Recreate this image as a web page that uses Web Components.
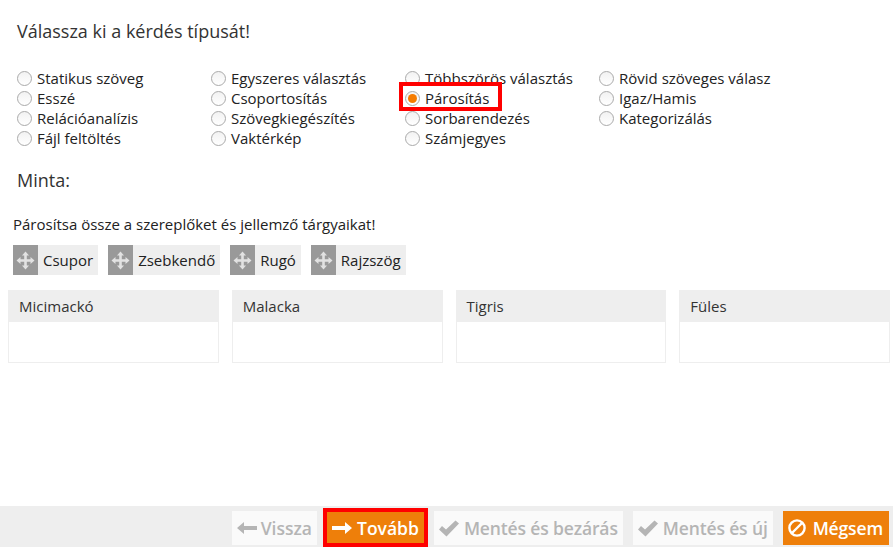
<!DOCTYPE html>
<html lang="hu"><head><meta charset="utf-8"><title>Kérdés típusa</title>
<style>
html,body{margin:0;height:100%;}
body{font-family:"Open Sans",sans-serif;color:#222;background:#fff;}
</style></head><body>
<type-page></type-page>
<script>
function el(name, css, html){
  customElements.define(name, class extends HTMLElement{
    connectedCallback(){
      if(this.shadowRoot) return;
      const r=this.attachShadow({mode:'open'});
      r.innerHTML='<style>'+css+'</style>'+(typeof html==='function'?html(this):html);
    }
  });
}
el('radio-opt',`
:host{display:flex;align-items:center;height:20px;font-size:15px;line-height:20px;color:#222;position:relative;}
.r{box-sizing:border-box;width:15px;height:15px;border-radius:50%;border:1px solid #aaa;background:linear-gradient(#f2f2f2,#fff);margin-right:5px;flex:none;display:flex;align-items:center;justify-content:center;}
.r i{display:block;width:9px;height:9px;border-radius:50%;background:#f57c00;}
.t{white-space:nowrap;}
.mark{position:absolute;box-sizing:border-box;left:-6px;top:-6px;width:103px;height:29px;border:4px solid #f00;pointer-events:none;}
`,h=>`<span class="r">${h.hasAttribute('checked')?'<i></i>':''}</span><span class="t"><slot></slot></span>${h.hasAttribute('marked')?'<span class="mark"></span>':''}`);

el('drag-chip',`
:host{display:flex;align-items:center;height:30px;background:#eee;font-size:15px;color:#222;white-space:nowrap;}
.i{width:25px;height:30px;background:#999;display:flex;align-items:center;justify-content:center;flex:none;margin-right:5px;}
.t{padding-right:5px;}
`,`<span class="i"><svg width="19" height="19" viewBox="0 0 19 19" fill="#e2e2e2"><path d="M9.5 .5 13 4.5H10.8V8.2H14.5V6L18.5 9.5 14.5 13V10.8H10.8V14.5H13L9.5 18.5 6 14.5H8.2V10.8H4.5V13L.5 9.5 4.5 6V8.2H8.2V4.5H6Z"/></svg></span><span class="t"><slot></slot></span>`);

el('drop-card',`
:host{display:block;box-sizing:border-box;flex:1 1 0;height:73px;border:1px solid #eee;background:#fff;}
.h{height:31px;margin:0;background:#eee;font-size:15px;line-height:31px;color:#333;padding-left:10px;}
`,`<div class="h"><slot></slot></div>`);

el('bar-btn',`
:host{display:flex;align-items:center;height:34px;box-sizing:border-box;padding:0 5px;background:#fafafa;color:#b5b5b5;font-size:17.5px;font-weight:600;white-space:nowrap;position:relative;}
:host([active]){background:#ee7f0a;color:#fff;}
:host([tight]){letter-spacing:-.14px;}
svg{flex:none;fill:currentColor;margin-right:5px;}
:host([icon=left]) svg{margin-right:4px;}
:host([icon=ban]) svg{margin-right:7px;}
:host([icon=ban]){padding-right:6px;}
.mark{position:absolute;box-sizing:border-box;left:-4px;top:-3px;right:-4px;bottom:-2px;border:4px solid #f00;pointer-events:none;}
`,h=>{
 const ic={
  left:'<svg width="20" height="12" viewBox="0 0 20 12"><path d="M0 6 7 0V4H20V8H7V12Z"/></svg>',
  right:'<svg width="20" height="12" viewBox="0 0 20 12"><path d="M20 6 13 0V4H0V8H13V12Z"/></svg>',
  check:'<svg width="20" height="17" viewBox="0 0 20 16"><path d="M0 9 3 5.5 7 9 16.5 0 20 3 7.5 16Z"/></svg>',
  ban:'<svg width="18" height="18" viewBox="0 0 18 18"><circle cx="9" cy="9" r="7.6" fill="none" stroke="currentColor" stroke-width="2.4"/><path d="M4 14 14 4" stroke="currentColor" stroke-width="2.4"/></svg>'
 };
 return ic[h.getAttribute('icon')]+'<span><slot></slot></span>'+(h.hasAttribute('marked')?'<span class="mark"></span>':'');
});

el('type-page',`
:host{display:flex;flex-direction:column;height:547px;width:893px;overflow:hidden;}
h2{font-size:18px;font-weight:400;line-height:22px;margin:20px 0 0 17px;color:#333;}
.grid{display:grid;grid-template-columns:repeat(4,194px);grid-auto-rows:20px;margin:26px 0 0 17px;}
h3{font-size:18px;font-weight:400;line-height:22px;margin:21px 0 0 17px;color:#333;}
p{font-size:15px;line-height:20px;margin:23px 0 0 13px;color:#222;}
.chips{display:flex;gap:10px;margin:11px 0 0 13px;}
.cards{display:flex;gap:13px;margin:15px 3px 0 8px;}
.foot{margin-top:auto;height:41px;background:#eee;display:flex;justify-content:flex-end;gap:10px;padding:5px 4px 2px 0;box-sizing:border-box;}
`,`<h2>Válassza ki a kérdés típusát!</h2>
<div class="grid">
<radio-opt>Statikus szöveg</radio-opt><radio-opt>Egyszeres választás</radio-opt><radio-opt>Többszörös választás</radio-opt><radio-opt>Rövid szöveges válasz</radio-opt>
<radio-opt>Esszé</radio-opt><radio-opt>Csoportosítás</radio-opt><radio-opt checked marked>Párosítás</radio-opt><radio-opt>Igaz/Hamis</radio-opt>
<radio-opt>Relációanalízis</radio-opt><radio-opt>Szövegkiegészítés</radio-opt><radio-opt>Sorbarendezés</radio-opt><radio-opt>Kategorizálás</radio-opt>
<radio-opt>Fájl feltöltés</radio-opt><radio-opt>Vaktérkép</radio-opt><radio-opt>Számjegyes</radio-opt>
</div>
<h3>Minta:</h3>
<p>Párosítsa össze a szereplőket és jellemző tárgyaikat!</p>
<div class="chips"><drag-chip>Csupor</drag-chip><drag-chip>Zsebkendő</drag-chip><drag-chip>Rugó</drag-chip><drag-chip>Rajzszög</drag-chip></div>
<div class="cards"><drop-card>Micimackó</drop-card><drop-card>Malacka</drop-card><drop-card>Tigris</drop-card><drop-card>Füles</drop-card></div>
<div class="foot">
<bar-btn icon="left">Vissza</bar-btn><bar-btn icon="right" active marked>Tovább</bar-btn><bar-btn icon="check" tight>Mentés és bezárás</bar-btn><bar-btn icon="check" tight>Mentés és új</bar-btn><bar-btn icon="ban" active tight>Mégsem</bar-btn>
</div>`);
</script>
</body></html>
